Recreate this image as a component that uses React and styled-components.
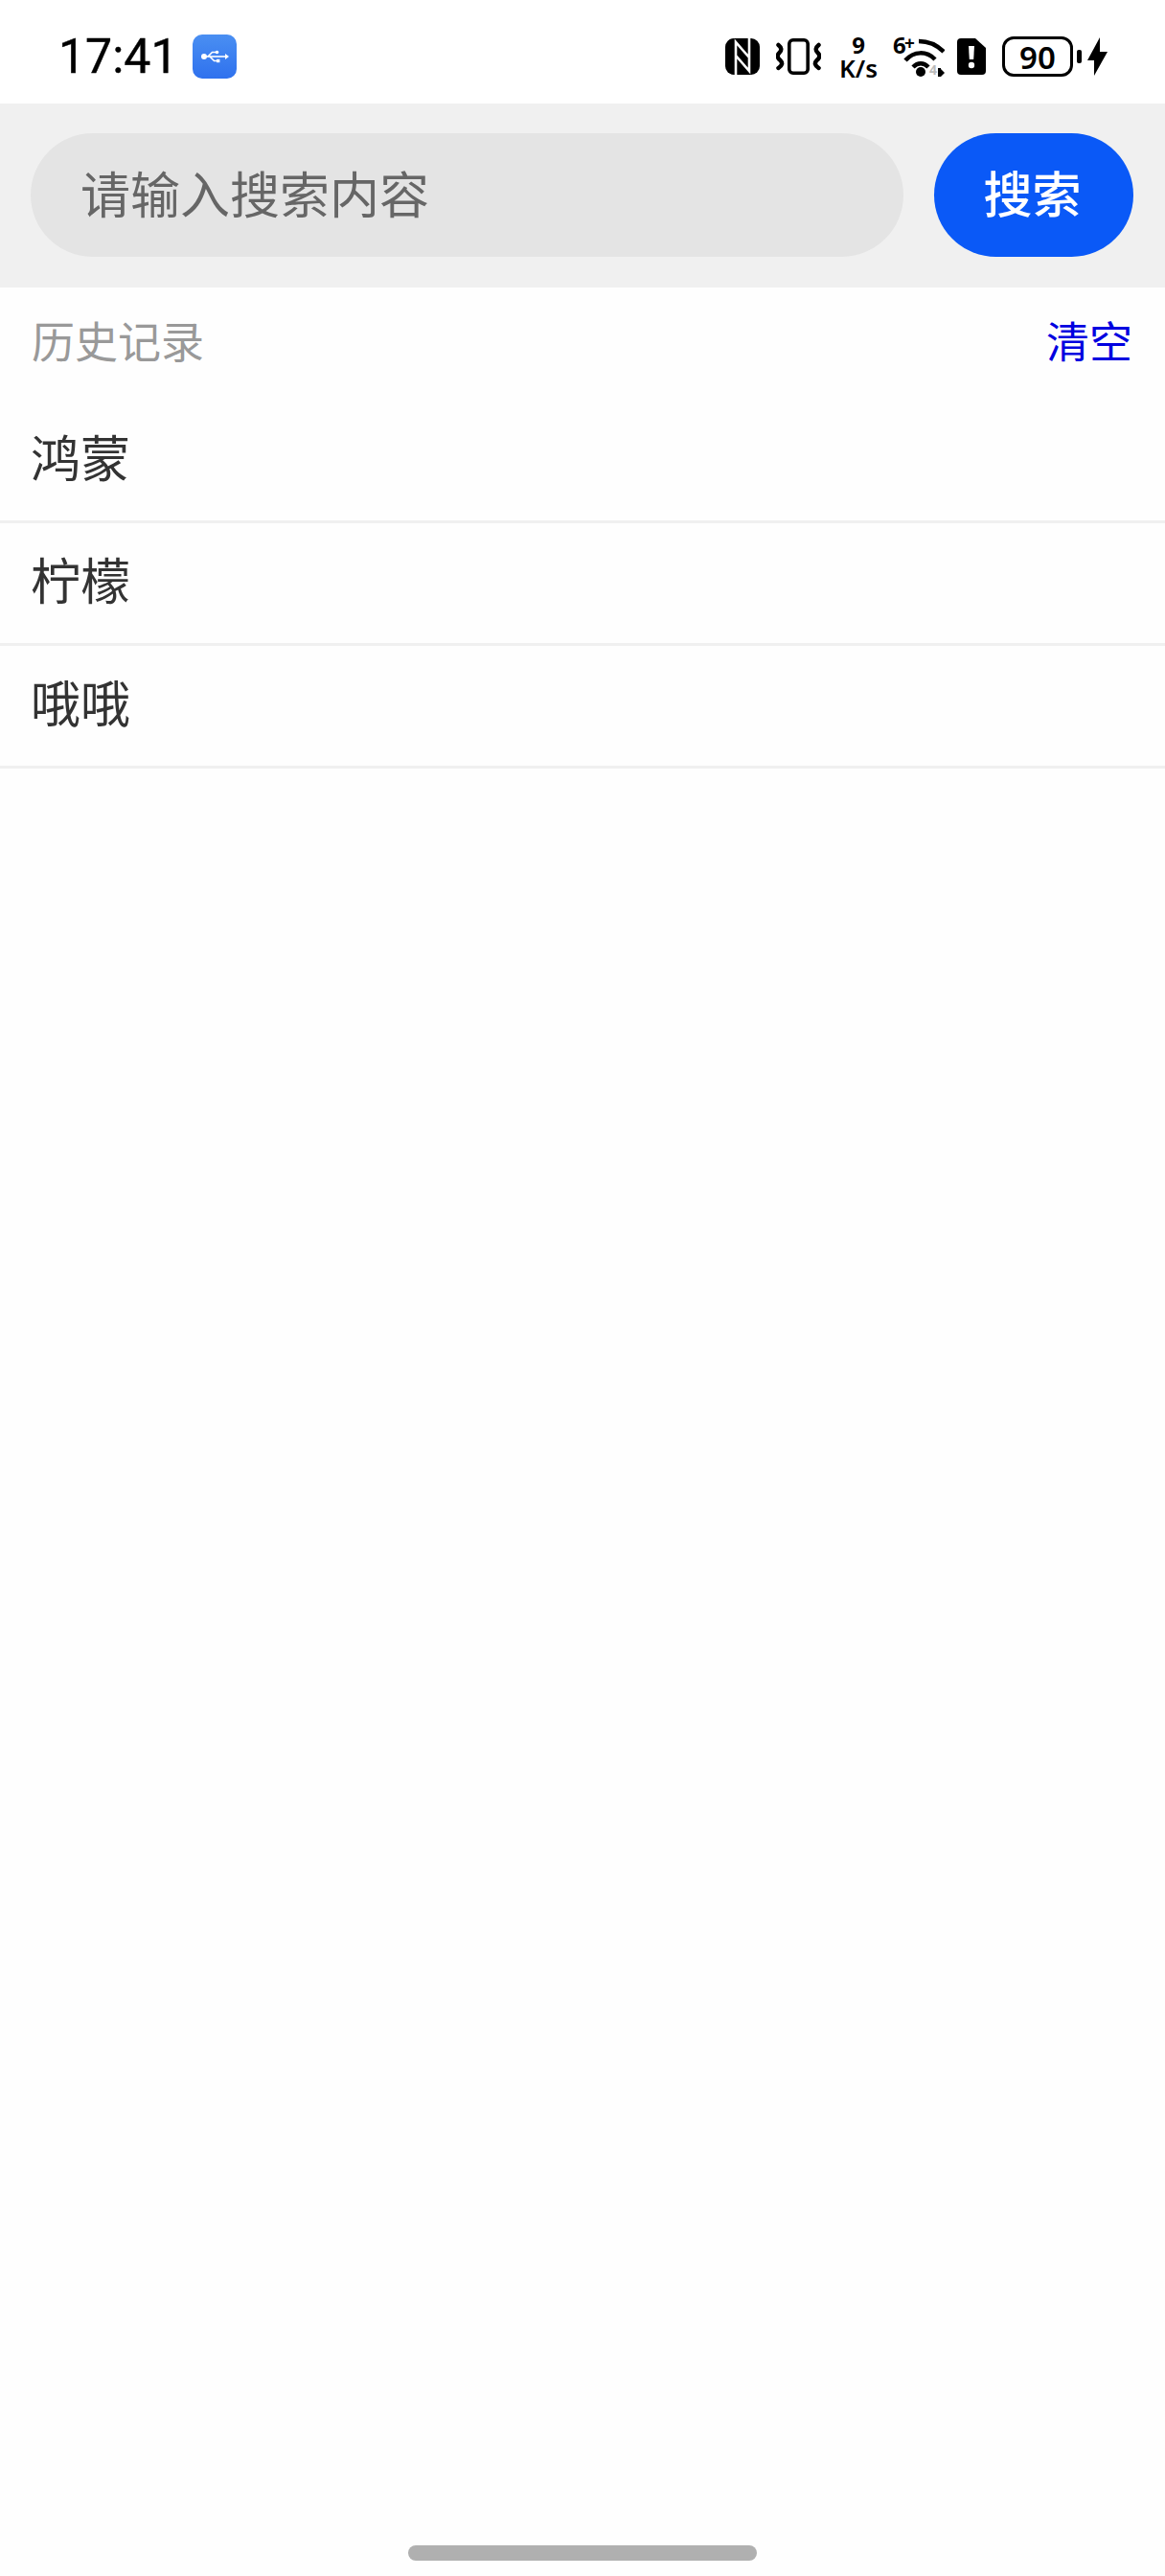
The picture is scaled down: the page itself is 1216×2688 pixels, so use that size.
import React from 'react';
import styled, { createGlobalStyle } from 'styled-components';

const GlobalStyle = createGlobalStyle`
    html, body {
        margin: 0;
        padding: 0;
        background: #fefefe;
    }
    body {
        font-family: "Noto Sans CJK SC", "Noto Sans", sans-serif;
    }
`;

const Page = styled.div`
    width: 1216px;
    height: 2688px;
    display: flex;
    flex-direction: column;
    background: #fefefe;
`;

const StatusBar = styled.div`
    height: 108px;
    flex-shrink: 0;
    display: flex;
    align-items: center;
    justify-content: space-between;
    padding: 10px 60px 0 61px;
    box-sizing: border-box;
    background: #fff;
`;

const StatusLeft = styled.div`
    display: flex;
    align-items: center;
    gap: 15px;
`;

const Clock = styled.span`
    font-family: Roboto, sans-serif;
    font-size: 50px;
    font-weight: 400;
    letter-spacing: 0;
    line-height: 60px;
    color: #000;
    -webkit-text-stroke: 0.4px #000;
`;

const UsbBadge = styled.div`
    width: 46px;
    height: 46px;
    border-radius: 10px;
    background: linear-gradient(#4a8ff2, #2f71ee);
    display: flex;
    align-items: center;
    justify-content: center;
`;

const StatusRight = styled.div`
    display: flex;
    align-items: center;
`;

const StatusItem = styled.div`
    margin-left: ${({ gap }) => gap}px;
    display: flex;
    align-items: center;
`;

const SpeedText = styled.div`
    width: 40px;
    display: flex;
    flex-direction: column;
    align-items: center;
    font-family: "Noto Sans", sans-serif;
    font-weight: 600;
    color: #000;
    white-space: nowrap;
`;

const SpeedValue = styled.span`
    font-size: 24px;
    font-weight: 700;
    line-height: 25px;
`;

const SpeedUnit = styled.span`
    font-size: 26px;
    line-height: 25px;
`;

const WifiWrap = styled.div`
    position: relative;
    width: 54px;
    height: 41px;
`;

const WifiLabel = styled.span`
    position: absolute;
    left: 0;
    top: -6px;
    font-family: "Noto Sans", sans-serif;
    font-size: 24px;
    font-weight: 700;
    line-height: 28px;
    color: #000;
`;

const WifiPlus = styled(WifiLabel)`
    left: 12px;
    top: -8px;
    font-size: 19px;
`;

const WifiGen = styled(WifiLabel)`
    left: 38px;
    top: 26px;
    font-size: 14px;
    line-height: 16px;
    color: #bbb;
`;

const Battery = styled.div`
    width: 74px;
    height: 42px;
    box-sizing: border-box;
    border: 3px solid #000;
    border-radius: 12px;
    display: flex;
    align-items: center;
    justify-content: center;
    font-family: "Noto Sans", sans-serif;
    font-size: 33px;
    font-weight: 600;
    color: #000;
`;

const BatteryCap = styled.div`
    width: 5px;
    height: 14px;
    margin-left: 4px;
    border-radius: 2px;
    background: #000;
`;

const SearchBand = styled.div`
    height: 192px;
    flex-shrink: 0;
    box-sizing: border-box;
    padding: 31px 33px 0 32px;
    display: flex;
    gap: 32px;
    align-items: flex-start;
    background: #f0f0f0;
`;

const SearchInput = styled.div`
    flex: 1;
    height: 129px;
    box-sizing: border-box;
    padding: 0 0 7px 52px;
    display: flex;
    align-items: center;
    border-radius: 65px;
    background: #e4e4e4;
    color: #666;
    font-size: 52px;
`;

const SearchButton = styled.div`
    width: 208px;
    height: 129px;
    box-sizing: border-box;
    padding: 0 3px 8px 0;
    display: flex;
    align-items: center;
    justify-content: center;
    border-radius: 65px;
    background: #0a59f7;
    color: #fff;
    font-size: 51px;
    font-weight: 500;
`;

const HistoryHeader = styled.div`
    height: 118px;
    flex-shrink: 0;
    box-sizing: border-box;
    padding: 0 34px 9px 33px;
    display: flex;
    align-items: center;
    justify-content: space-between;
`;

const HistoryTitle = styled.span`
    font-size: 45px;
    color: #999;
`;

const ClearLink = styled.span`
    font-size: 45px;
    color: #0000e0;
`;

const HistoryRow = styled.div`
    height: 128px;
    box-sizing: border-box;
    padding: 0 32px 10px;
    display: flex;
    align-items: center;
    border-bottom: 3px solid #f0f0f0;
    font-size: 52px;
    color: #333;
`;

const HomeBar = styled.div`
    width: 364px;
    height: 16px;
    margin: auto auto 16px;
    border-radius: 8px;
    background: #b0b0b0;
`;

const UsbIcon = () => (
    <svg width="30" height="16" viewBox="0 0 30 16" fill="#fff" stroke="#fff">
        <circle cx="4" cy="8" r="3" stroke="none" />
        <path d="M4 8h22" strokeWidth="1.600" />
        <path d="M26 5l4 3-4 3z" stroke="none" />
        <path d="M8 8l4.500-4.500h4" fill="none" strokeWidth="1.600" />
        <circle cx="17.500" cy="3.500" r="1.800" stroke="none" />
        <path d="M10 8l4.500 4.500h3" fill="none" strokeWidth="1.600" />
        <rect x="17" y="10.800" width="3.400" height="3.400" stroke="none" />
    </svg>
);

const NfcIcon = () => (
    <svg width="36" height="38" viewBox="0 0 36 38">
        <rect width="36" height="38" rx="9" fill="#000" />
        <path d="M11 38V4l14 16M11 18l14 16V0" fill="none" stroke="#fff" strokeWidth="2.600" />
    </svg>
);

const VibrateIcon = () => (
    <svg width="47" height="38" viewBox="0 0 47 38" fill="none" stroke="#000">
        <rect x="13.800" y="1.800" width="19.400" height="34.400" rx="4" strokeWidth="3.600" />
        <path d="M2.500 7q5 4 1 8q-4 4 1 8q4 4-2 8" strokeWidth="4.500" strokeLinecap="round" />
        <path d="M44.500 7q-5 4-1 8q4 4-1 8q-4 4 2 8" strokeWidth="4.500" strokeLinecap="round" />
    </svg>
);

const WifiArcs = () => (
    <svg width="54" height="41" viewBox="0 0 54 41" fill="none" stroke="#000">
        <path d="M27 4c10 0 19 4 26 11" strokeWidth="4.500" />
        <path d="M13 24c9-10 22-10 31-1" strokeWidth="4.500" />
        <path d="M21 31c5-5 11-5 16 0" strokeWidth="4.500" />
        <circle cx="29" cy="36" r="5" fill="#000" stroke="none" />
        <path d="M47 32h3v9h-3zM50 33l4 4-4 4z" fill="#000" stroke="none" />
    </svg>
);

const SimIcon = () => (
    <svg width="30" height="38" viewBox="0 0 30 38">
        <path d="M4 0h15l11 10v24a4 4 0 0 1-4 4H4a4 4 0 0 1-4-4V4a4 4 0 0 1 4-4z" fill="#000" />
        <path d="M12 8h6l-.8 14h-4.400z" fill="#fff" />
        <circle cx="15" cy="28" r="3.200" fill="#fff" />
    </svg>
);

const BoltIcon = () => (
    <svg width="21" height="40" viewBox="0 0 21 40">
        <path d="M13 0v15h8L7 40V24H0z" fill="#000" />
    </svg>
);

const historyItems = ['鸿蒙', '柠檬', '哦哦'];

const App = () => {
    return (
        <Page>
            <GlobalStyle />
            <StatusBar>
                <StatusLeft>
                    <Clock>17:41</Clock>
                    <UsbBadge><UsbIcon /></UsbBadge>
                </StatusLeft>
                <StatusRight>
                    <NfcIcon />
                    <StatusItem gap={17}><VibrateIcon /></StatusItem>
                    <StatusItem gap={19}>
                        <SpeedText>
                            <SpeedValue>9</SpeedValue>
                            <SpeedUnit>K/s</SpeedUnit>
                        </SpeedText>
                    </StatusItem>
                    <StatusItem gap={16}>
                        <WifiWrap>
                            <WifiArcs />
                            <WifiLabel>6</WifiLabel>
                            <WifiPlus>+</WifiPlus>
                            <WifiGen>4</WifiGen>
                        </WifiWrap>
                    </StatusItem>
                    <StatusItem gap={13}><SimIcon /></StatusItem>
                    <StatusItem gap={17}><Battery>90</Battery></StatusItem>
                    <BatteryCap />
                    <StatusItem gap={6}><BoltIcon /></StatusItem>
                </StatusRight>
            </StatusBar>
            <SearchBand>
                <SearchInput>请输入搜索内容</SearchInput>
                <SearchButton>搜索</SearchButton>
            </SearchBand>
            <HistoryHeader>
                <HistoryTitle>历史记录</HistoryTitle>
                <ClearLink>清空</ClearLink>
            </HistoryHeader>
            {historyItems.map((item) => (
                <HistoryRow key={item}>{item}</HistoryRow>
            ))}
            <HomeBar />
        </Page>
    );
};

export default App;
